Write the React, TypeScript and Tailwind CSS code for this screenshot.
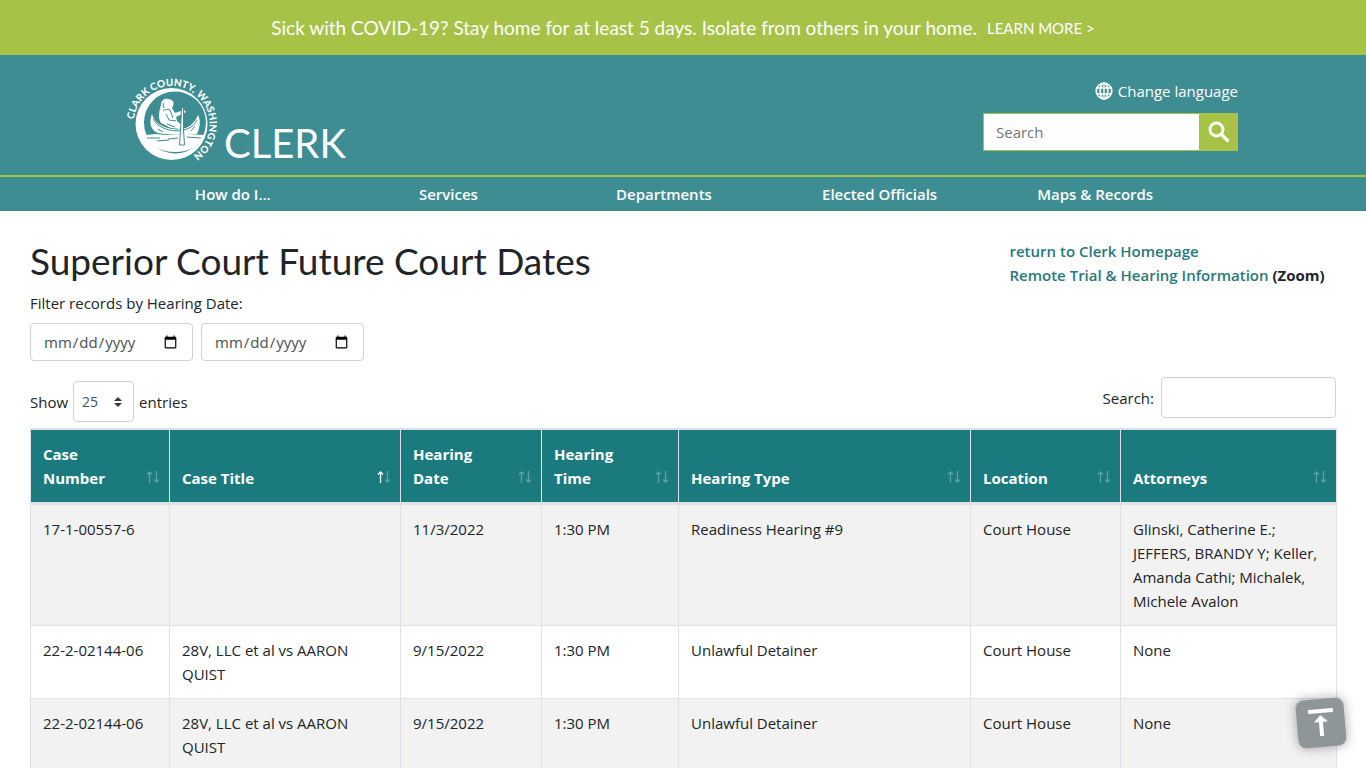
import { useState } from 'react'

const navItems = ['How do I...', 'Services', 'Departments', 'Elected Officials', 'Maps & Records']

const columns = [
  { label: 'Case Number', width: 'w-[139px]' },
  { label: 'Case Title', width: 'w-[231px]', sorted: true },
  { label: 'Hearing Date', width: 'w-[141px]' },
  { label: 'Hearing Time', width: 'w-[137px]' },
  { label: 'Hearing Type', width: 'w-[292px]' },
  { label: 'Location', width: 'w-[150px]' },
  { label: 'Attorneys', width: 'w-[216px]' },
]

const rows = [
  ['17-1-00557-6', '', '11/3/2022', '1:30 PM', 'Readiness Hearing #9', 'Court House', 'Glinski, Catherine E.; JEFFERS, BRANDY Y; Keller, Amanda Cathi; Michalek, Michele Avalon'],
  ['22-2-02144-06', '28V, LLC et al vs AARON QUIST', '9/15/2022', '1:30 PM', 'Unlawful Detainer', 'Court House', 'None'],
  ['22-2-02144-06', '28V, LLC et al vs AARON QUIST', '9/15/2022', '1:30 PM', 'Unlawful Detainer', 'Court House', 'None'],
]

function CountySeal() {
  return (
    <svg viewBox="0 0 92 86" className="w-[92px] h-[86px] shrink-0 overflow-visible" role="img" aria-label="Clark County, Washington">
      <defs>
        <path id="seal-ring" d="M5.800 42.400A38 38 0 1 1 62.500 79.900" />
      </defs>
      <text fill="#fff" className="font-['Lato'] font-black text-[10px]">
        <textPath href="#seal-ring">CLARK COUNTY, WASHINGTON</textPath>
      </text>
      {/* crescent */}
      <path
        fill="#fff"
        fillRule="evenodd"
        d="M43.500 11a36 36 0 1 0 .1 72a36 36 0 0 0-.1-72zM47 14.500a31 31 0 1 1-.1 62a31 31 0 0 1 .1-62z"
      />
      {/* water */}
      <path fill="#fff" d="M18 58l9-1 12 1 18-1 19 1c-4 11-15 17-29 17-14 0-25-6-29-17z" />
      <path stroke="#3e8d93" strokeWidth="1" fill="none" d="M19 61h13M29 64l12-1M59 60l14 1M40 62l10-1" />
      {/* canoe */}
      <path fill="#fff" d="M24 37c2 8 8 12 16 14 10 3 19 1 24-4 4-4 5-7 6-9 3 6 2 12-1 19-12 1-29 1-39-1-8-3-9-11-6-19z" />
      <path stroke="#3e8d93" strokeWidth="1" fill="none" d="M25 42c7 14 37 17 44 1M30 52l5 3M67 49l-4 5" />
      {/* paddler */}
      <path fill="#fff" d="M33 28c0-4 3-7 7-6 4 0 7 3 5 7l-1 2 3 5 9-3 2 2-10 5 1 4 7 6-3 2-10-1-10-5c-3-4-2-12 0-18z" />
      <path stroke="#3e8d93" strokeWidth="1" fill="none" d="M35 26l1 5M35 34c2-2 5-2 7-1l3 8M38 37l3 6 7 1M39 47l8 3" />
      {/* paddle */}
      <path stroke="#3e8d93" strokeWidth="1" fill="#fff" d="M53.500 31l2-1v23l1 15h-5l1-15z" />
    </svg>
  )
}

function SortArrows({ sorted = false }: { sorted?: boolean }) {
  return (
    <svg viewBox="0 0 16 14" className="w-4 h-[14px] shrink-0 mb-[6px]" fill="none" stroke="#fff" strokeWidth="1.300" aria-hidden="true">
      <path d="M4.500 13V2M2 4.500L4.500 2 7 4.500" strokeOpacity={sorted ? 1 : 0.3} />
      <path d="M11.500 1v11M9 9.500l2.500 2.500L14 9.500" strokeOpacity={0.3} />
    </svg>
  )
}

function Header() {
  return (
    <header className="bg-[#3e8d93] text-white">
      <div className="max-w-[1140px] mx-auto px-[15px] h-[120px] flex justify-between">
        <div className="flex items-start pt-[22px]">
          <CountySeal />
          <a href="#clerk" className="font-['Lato'] text-[40px] leading-[48px] pl-1 mt-[42px]">
            CLERK
          </a>
        </div>
        <div className="w-[255px] pt-6">
          <a href="#language" className="flex items-center justify-end gap-[5px] leading-6">
            <svg viewBox="0 0 18 18" className="w-[18px] h-[18px]" fill="none" stroke="#fff" strokeWidth="1.700" aria-hidden="true">
              <circle cx="9" cy="9" r="7.800" />
              <ellipse cx="9" cy="9" rx="3.800" ry="7.800" />
              <path d="M9 1v16M1.800 6h14.400M1.800 12h14.400" strokeWidth="1.400" />
            </svg>
            Change language
          </a>
          <form className="flex h-[38px] mt-[10px]">
            <input
              type="text"
              aria-label="Search"
              placeholder="Search"
              className="min-w-0 flex-1 bg-white border border-r-0 border-[#a6c347] px-3 text-gray-700 placeholder:text-[#6c757d]"
            />
            <button type="button" aria-label="Submit search" className="w-[39px] bg-[#a6c347] flex items-center justify-center">
              <svg viewBox="0 0 22 22" className="w-[22px] h-[22px]" fill="none" stroke="#fff" strokeWidth="2.800" aria-hidden="true">
                <circle cx="8.500" cy="8.500" r="6.500" />
                <path d="M13 13l7.500 7.500" strokeWidth="3.200" />
              </svg>
            </button>
          </form>
        </div>
      </div>
      <div className="border-t-2 border-[#a6c347]">
        <nav className="max-w-[1140px] mx-auto pl-3 pr-[50px] grid grid-cols-5 h-[34px] items-center text-center font-semibold">
          {navItems.map((item) => (
            <a key={item} href="#nav">{item}</a>
          ))}
        </nav>
      </div>
    </header>
  )
}

export default function App() {
  const [pageSize, setPageSize] = useState('25')

  return (
    <div className="min-h-screen bg-white font-['Open_Sans',sans-serif] text-[15px] leading-6 text-[#212529]">
      <div className="bg-[#a6c347] text-white font-['Lato'] h-[55px] flex items-center justify-center gap-[10px]">
        <span className="text-[19px]">Sick with COVID-19? Stay home for at least 5 days. Isolate from others in your home.</span>
        <a href="#covid" className="text-[15px]">LEARN MORE &gt;</a>
      </div>

      <Header />

      <main className="px-[30px] pt-7">
        <div className="flex">
          <div className="w-3/4">
            <h1 className="font-['Lato'] text-[37px] leading-[44px] mb-2">Superior Court Future Court Dates</h1>
            <p>Filter records by Hearing Date:</p>
            <div className="flex gap-2 mt-2">
              {['Start date', 'End date'].map((label) => (
                <input
                  key={label}
                  type="date"
                  aria-label={label}
                  className="w-[163px] h-[38px] border border-[#ced4da] rounded px-3 text-[#495057]"
                />
              ))}
            </div>
          </div>
          <div className="w-1/4 font-semibold text-[#2a777c]">
            <a href="#home" className="block">return to Clerk Homepage</a>
            <p className="whitespace-nowrap">
              <a href="#remote">Remote Trial &amp; Hearing Information</a>{' '}
              <strong className="font-bold text-[#212529]">(Zoom)</strong>
            </p>
          </div>
        </div>

        {/* Table controls */}
        <div className="flex justify-between items-start mt-4 mb-[6px]">
          <label className="flex items-center gap-[5px] mt-1">
            Show
            <span className="relative">
              <select
                value={pageSize}
                onChange={(e) => setPageSize(e.target.value)}
                className="block appearance-none w-[61px] h-[41px] border border-[#ced4da] rounded bg-white pl-2 text-sm text-[#495057]"
              >
                <option>10</option>
                <option>25</option>
                <option>50</option>
                <option>100</option>
              </select>
              <svg viewBox="0 0 8 10" className="absolute right-3 top-4 w-2 h-[10px] pointer-events-none" fill="#343a40" aria-hidden="true">
                <path d="M4 0L0 4h8zM4 10L0 6h8z" />
              </svg>
            </span>
            entries
          </label>
          <label className="flex items-center gap-[7px]">
            Search:
            <input type="search" className="w-[175px] h-[41px] border border-[#ced4da] rounded px-2" />
          </label>
        </div>

        <table className="w-full table-fixed border-collapse border border-[#dee2e6]">
          <thead className="bg-[#1a7a7e] text-white">
            <tr>
              {columns.map((col) => (
                <th key={col.label} className={`${col.width} border border-t-2 border-b-3 border-[#dee2e6] pl-3 pr-2 py-3 text-left align-bottom font-bold`}>
                  <div className="flex items-end justify-between gap-6">
                    <span>{col.label}</span>
                    <SortArrows sorted={col.sorted} />
                  </div>
                </th>
              ))}
            </tr>
          </thead>
          <tbody>
            {rows.map((row, i) => (
              <tr key={i} className="odd:bg-[#f2f2f2]">
                {row.map((cell, j) => (
                  <td key={j} className="border border-[#dee2e6] pl-3 pr-2 py-3 align-top">{cell}</td>
                ))}
              </tr>
            ))}
          </tbody>
        </table>
      </main>

      <button
        type="button"
        aria-label="Back to top"
        className="fixed right-[21px] bottom-[21px] w-[48px] h-[48px] rounded-lg bg-[#8f9698] -rotate-5 shadow-[0_0_12px_rgba(0,0,0,0.35)] flex items-center justify-center"
      >
        <svg viewBox="0 0 28 30" className="w-7 h-[30px]" fill="#fff" aria-hidden="true">
          <path d="M2 1h25v4H2zM14 7l7 7h-5v14h-4V14H7z" />
        </svg>
      </button>
    </div>
  )
}
